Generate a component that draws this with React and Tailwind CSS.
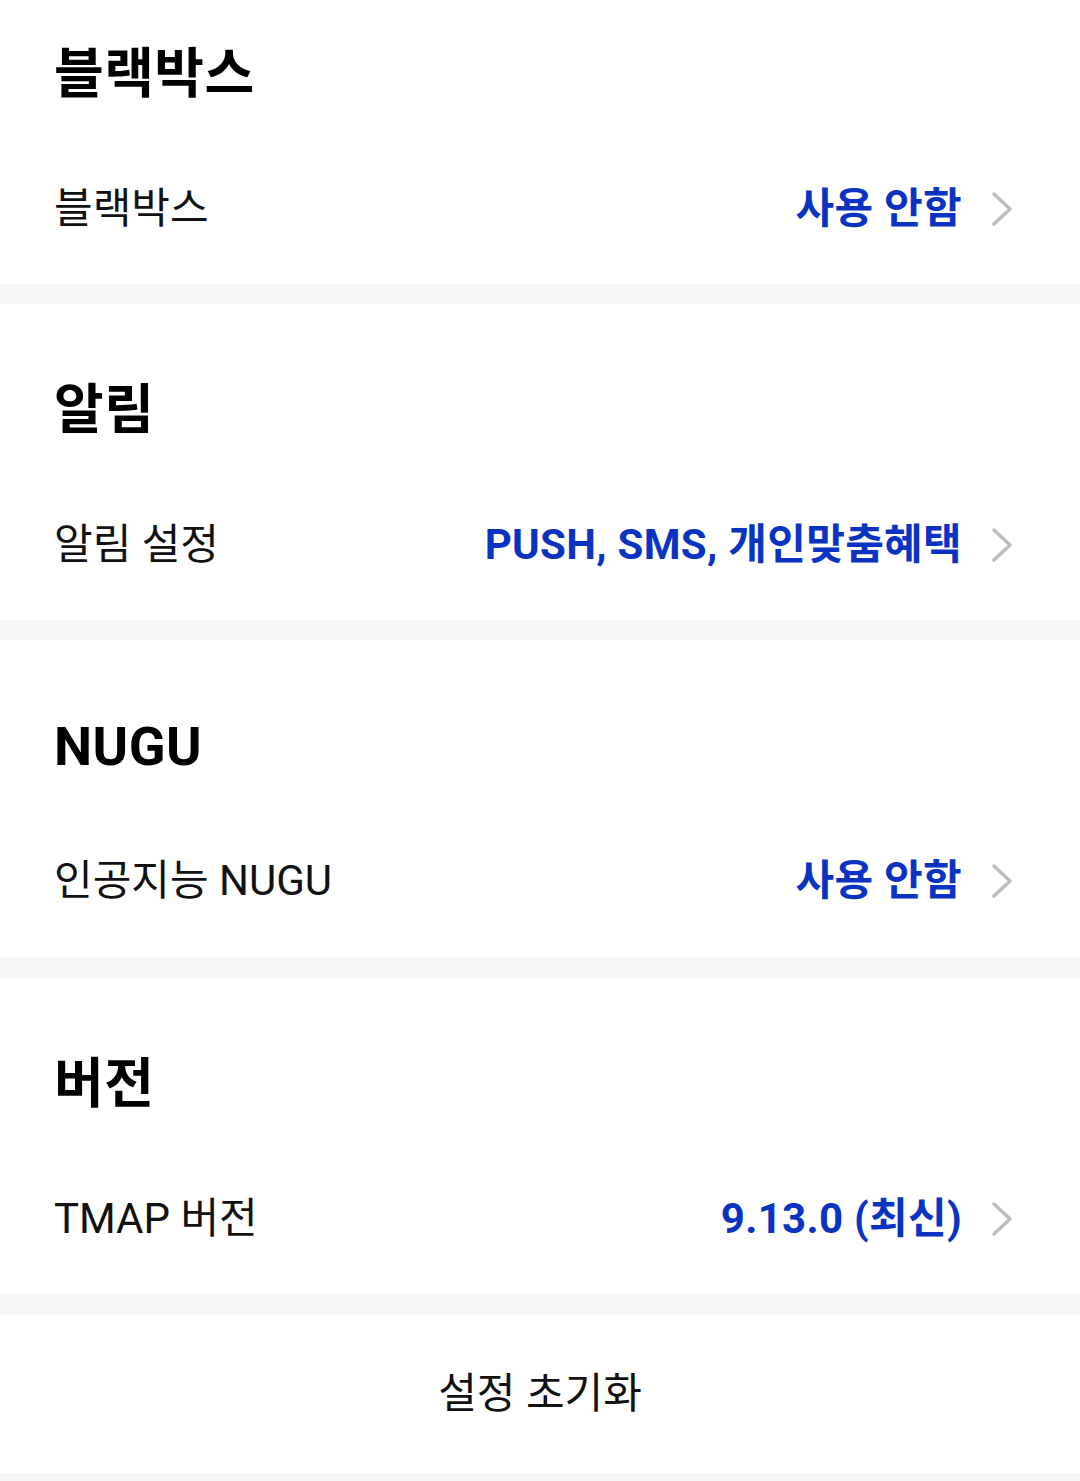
import React from "react";

const font = { fontFamily: 'Roboto, "Noto Sans CJK KR", "Noto Sans", sans-serif' };

function Chevron() {
  return (
    <svg width="24" height="36" viewBox="0 0 24 36" className="ml-[28px] shrink-0">
      <polyline points="4,3 20,18 4,33" fill="none" stroke="#bdbdbd" strokeWidth="3.5" strokeLinecap="round" strokeLinejoin="round" />
    </svg>
  );
}

function Section({ title, label, value, first, extra }) {
  return (
    <div className={`bg-white ${first ? "pt-[11px]" : "pt-[43px]"} ${extra ? "pb-[6px]" : "pb-[5px]"}`}>
      <div className="h-[128px] flex items-center px-[54px]">
        <span className="text-[54px] font-bold text-black leading-none tracking-[0.5px]">{title}</span>
      </div>
      <div className="h-[140px] flex items-center pl-[54px] pr-[66px]">
        <span className="text-[42px] text-[#111] leading-none flex-1">{label}</span>
        <span className="text-[42px] font-bold text-[#0b33c2] leading-none tracking-[0.3px]">{value}</span>
        <Chevron />
      </div>
    </div>
  );
}

export default function App() {
  return (
    <div className="w-[1080px] h-[1481px] bg-[#f5f6f8] overflow-hidden flex flex-col" style={font}>
      <Section first title="블랙박스" label="블랙박스" value="사용 안함" />
      <div className="h-[20px] shrink-0" />
      <Section title="알림" label="알림 설정" value="PUSH, SMS, 개인맞춤혜택" />
      <div className="h-[20px] shrink-0" />
      <Section extra title="NUGU" label="인공지능 NUGU" value="사용 안함" />
      <div className="h-[21px] shrink-0" />
      <Section title="버전" label="TMAP 버전" value="9.13.0 (최신)" />
      <div className="h-[21px] shrink-0" />
      <div className="bg-white h-[158px] shrink-0 flex items-center justify-center">
        <span className="text-[42px] text-[#111] leading-none">설정 초기화</span>
      </div>
    </div>
  );
}
